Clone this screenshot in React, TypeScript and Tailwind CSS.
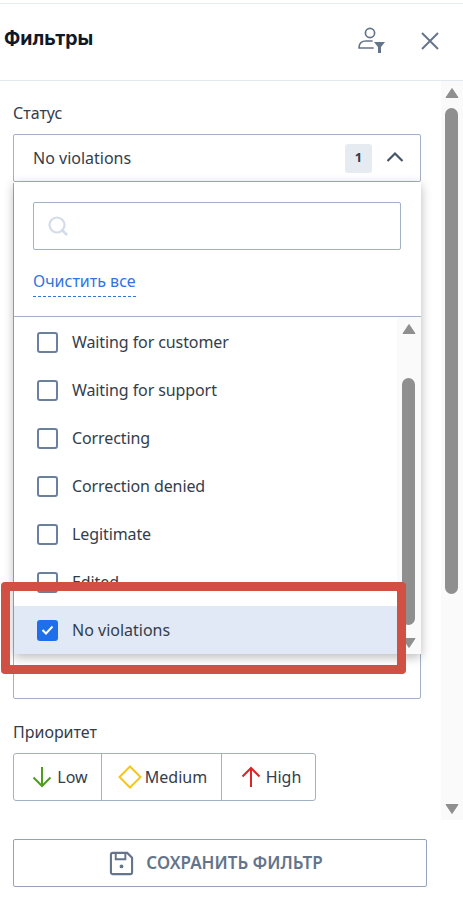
import React from "react";

function Box({ label }: { label: string }) {
  return (
    <div className="flex h-12 shrink-0 items-center pl-[23px]">
      <span className="h-[21px] w-[21px] rounded-[3px] border-2 border-[#6b7f9e] bg-white" />
      <span className="ml-[14px] text-[16px] tracking-[-0.1px] text-[#333d4b]">{label}</span>
    </div>
  );
}

function Tri({ down = false, className = "" }: { down?: boolean; className?: string }) {
  return (
    <svg width="14" height="12" viewBox="0 0 14 12" className={className}>
      <path d={down ? "M1 1.500h12L7 10.500z" : "M7 1.500l6 9H1z"} fill="#8f8f8f" stroke="#8f8f8f" strokeLinejoin="round" />
    </svg>
  );
}

export default function App() {
  return (
    <div className="relative flex h-[898px] w-[463px] flex-col overflow-hidden bg-white font-['Noto_Sans',sans-serif] text-[#333d4b]">
      <div className="mt-[3px] h-px shrink-0 bg-[#e6ebf2]" />
      <header className="flex h-[77px] shrink-0 items-center border-b border-[#e2e8f0] pl-1">
        <h1 className="mt-[-6px] flex-1 font-['Inter',sans-serif] text-[19.500px] font-bold text-[#111827]">Фильтры</h1>
        <svg width="27" height="26" viewBox="0 0 27 26" fill="none" className="mr-[35px] mt-[-5px]">
          <circle cx="12" cy="6" r="4.600" stroke="#64748b" strokeWidth="1.700" />
          <path d="M1 20.500c0-4 3-6.500 7-6.500h6M1 21h14" stroke="#64748b" strokeWidth="1.700" strokeLinecap="round" />
          <path d="M16 15h11l-4 5v6h-3v-6z" fill="#64748b" />
        </svg>
        <svg width="20" height="20" viewBox="0 0 20 20" fill="none" className="mr-[23px] mt-[-3px]">
          <path d="M2 2l16 16M18 2L2 18" stroke="#64748b" strokeWidth="1.900" />
        </svg>
      </header>

      <div className="flex h-[739px] shrink-0">
        <main className="relative w-[441px] shrink-0 pl-[13px]">
          <div className="mt-[21px] text-[16px] leading-[22px]">Статус</div>
          <div className="mt-[10px] flex h-[48px] w-[408px] items-center rounded-[2px] border border-[#a3b1c6] pl-[19px] pr-[16px]">
            <span className="flex-1 text-[16px]">No violations</span>
            <span className="flex h-[29px] w-[27px] items-center justify-center rounded-[3px] bg-[#e6ebf2] text-[13px] font-bold">1</span>
            <svg width="18" height="12" viewBox="0 0 18 12" fill="none" className="ml-[14px] mt-[-2px]">
              <path d="M1.500 10L9 2.500 16.500 10" stroke="#475569" strokeWidth="2.200" />
            </svg>
          </div>
          <div className="h-[517px] w-[408px] rounded-[2px] border border-[#a3b1c6]" />
          <div className="mt-[22px] text-[16px] leading-[22px]">Приоритет</div>
          <div className="mt-[10px] flex h-[48px] w-[303px] rounded-[3px] border border-[#a3b1c6] text-[16px]">
            <div className="flex w-[88px] items-center justify-center gap-[5px] border-r border-[#a3b1c6] pl-[5px]">
              <svg width="20" height="22" viewBox="0 0 20 22" fill="none">
                <path d="M10 1v19M1.500 11.500L10 20l8.500-8.500" stroke="#4f9d1f" strokeWidth="2" />
              </svg>
              <span>Low</span>
            </div>
            <div className="flex w-[120px] items-center justify-center gap-[3px] border-r border-[#a3b1c6] pl-[2px]">
              <svg width="24" height="24" viewBox="0 0 24 24" fill="none">
                <path d="M12 1.500L22.500 12 12 22.500 1.500 12z" stroke="#f5c518" strokeWidth="2" />
              </svg>
              <span>Medium</span>
            </div>
            <div className="flex flex-1 items-center justify-center gap-[5px] pl-[5px]">
              <svg width="20" height="22" viewBox="0 0 20 22" fill="none">
                <path d="M10 21V2M1.500 10.500L10 2l8.500 8.500" stroke="#dc2626" strokeWidth="2" />
              </svg>
              <span>High</span>
            </div>
          </div>

          <div className="absolute left-[14px] top-[101px] z-10 flex h-[472px] w-[407px] flex-col bg-white shadow-[0_3px_10px_rgba(0,0,0,0.28)]">
            <div className="mx-[19px] mt-[20px] flex h-[48px] w-[368px] shrink-0 items-center rounded-[2px] border border-[#a3b1c6] pl-[14px]">
              <svg width="21" height="21" viewBox="0 0 21 21" fill="none">
                <circle cx="9" cy="9" r="7.500" stroke="#d3dce8" strokeWidth="2.200" />
                <path d="M14.500 14.500l4.500 4.500" stroke="#d3dce8" strokeWidth="2.600" />
              </svg>
            </div>
            <div className="ml-[19px] mt-[21px] w-fit shrink-0 border-b border-dashed border-b-[#2f74e0] pb-[4px] text-[16px] leading-[21px] text-[#2f74e0]">
              Очистить все
            </div>
            <div className="mt-[19px] h-px shrink-0 bg-[#a3b1c6]" />
            <div className="flex min-h-0 flex-1">
              <div className="flex min-w-0 flex-1 flex-col overflow-hidden pt-px">
                <Box label="Waiting for customer" />
                <Box label="Waiting for support" />
                <Box label="Correcting" />
                <Box label="Correction denied" />
                <Box label="Legitimate" />
                <Box label="Edited" />
                <div className="flex h-[48px] shrink-0 items-center bg-[#e0e9f5] pl-[23px]">
                  <span className="flex h-[21px] w-[21px] items-center justify-center rounded-[3px] bg-[#1f6feb]">
                    <svg width="13" height="10" viewBox="0 0 13 10" fill="none">
                      <path d="M1.500 5l3.500 3.500 6.500-7" stroke="#fff" strokeWidth="2" />
                    </svg>
                  </span>
                  <span className="ml-[14px] text-[16px]">No violations</span>
                </div>
              </div>
              <div className="flex w-[24px] shrink-0 flex-col items-start bg-[#fafafa] pl-[5px]">
                <Tri className="mt-[6px] shrink-0" />
                <div className="mt-[43px] h-[247px] w-[13px] shrink-0 rounded-[7px] bg-[#8f8f8f]" />
                <Tri down className="mt-[12px] shrink-0" />
              </div>
            </div>
          </div>
        </main>

        <aside className="flex w-[22px] shrink-0 flex-col items-center bg-[#fafafa] pr-[1px]">
          <Tri className="mt-[6px] shrink-0" />
          <div className="mt-[9px] h-[486px] w-[13px] shrink-0 rounded-[7px] bg-[#8f8f8f]" />
          <Tri down className="mt-[209px] shrink-0" />
        </aside>
      </div>

      <div className="pl-[13px] pt-[19px]">
        <button className="flex h-[48px] w-[414px] items-center justify-center gap-[12px] rounded-[2px] border border-[#94a3b8] pr-[8px] text-[17px] font-semibold text-[#64748b]">
          <svg width="25" height="25" viewBox="0 0 26 26" fill="none">
            <path d="M2 4a2 2 0 012-2h15l5 5v15a2 2 0 01-2 2H4a2 2 0 01-2-2z" stroke="#64748b" strokeWidth="2.200" />
            <path d="M7 2v6.500h10V2" stroke="#64748b" strokeWidth="2" />
            <circle cx="13" cy="16" r="2" fill="#64748b" />
          </svg>
          СОХРАНИТЬ ФИЛЬТР
        </button>
      </div>

      <div className="pointer-events-none absolute left-[1px] top-[582px] z-20 h-[92px] w-[405px] rounded-[4px] border-[9px] border-[#d05043]" />
    </div>
  );
}
